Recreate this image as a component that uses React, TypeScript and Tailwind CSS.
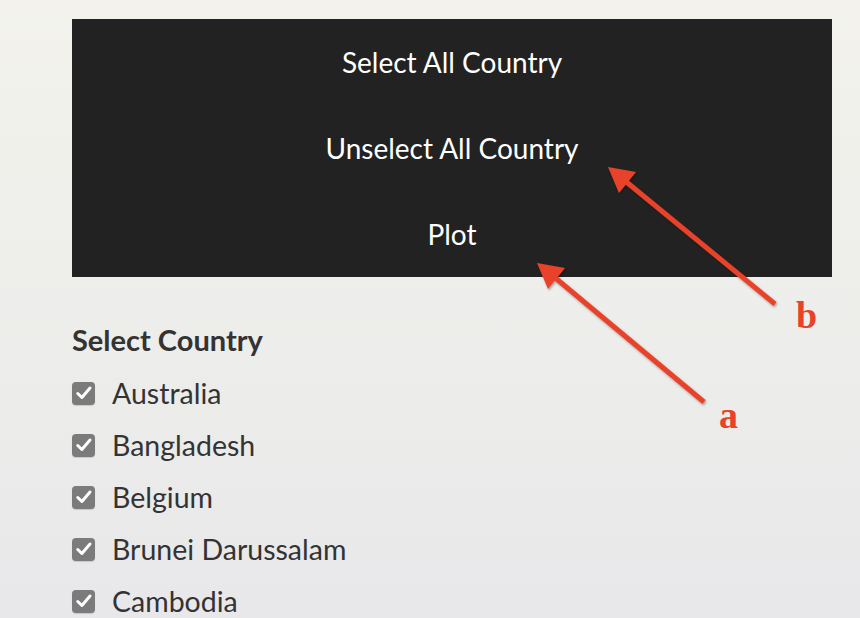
import React from "react";

const countries = ["Australia", "Bangladesh", "Belgium", "Brunei Darussalam", "Cambodia"];

function Check() {
  return (
    <span className="flex h-[23px] w-[23px] shrink-0 items-center justify-center rounded-[4px] bg-[#7b7b7b] shadow-[0_1px_1px_rgba(0,0,0,0.15)]">
      <svg width="20" height="20" viewBox="0 0 16 16" fill="none">
        <path d="M3 8.4 L6.3 11.6 L12.8 4" stroke="white" strokeWidth="2.4" strokeLinecap="round" strokeLinejoin="round" />
      </svg>
    </span>
  );
}

export default function App() {
  return (
    <div
      className="relative h-[618px] w-[860px] overflow-hidden bg-gradient-to-b from-[#f3f3ec] to-[#e8e8ea] text-[#333]"
      style={{ fontFamily: "Lato, 'Open Sans', sans-serif" }}
    >
      <div className="pl-[72px] pt-[19px]">
        <div className="flex w-[760px] flex-col bg-[#222222] text-[28px] text-white">
          <button className="flex h-[86px] items-center justify-center">Select All Country</button>
          <button className="flex h-[86px] items-center justify-center">Unselect All Country</button>
          <button className="flex h-[86px] items-center justify-center">Plot</button>
        </div>
        <div className="mt-[48px] text-[29px] font-bold leading-[30px] text-[#333]">Select Country</div>
        <div className="mt-[12px] flex flex-col">
          {countries.map((c) => (
            <label key={c} className="flex h-[52px] items-center gap-[17px]">
              <Check />
              <span className="text-[28.5px] text-[#333]">{c}</span>
            </label>
          ))}
        </div>
      </div>

      <svg className="pointer-events-none absolute left-0 top-0" width="860" height="618" viewBox="0 0 860 618">
        <defs>
          <filter id="sh" x="-10%" y="-10%" width="120%" height="120%">
            <feDropShadow dx="1" dy="1.5" stdDeviation="1.2" floodColor="#000" floodOpacity="0.35" />
          </filter>
        </defs>
        <g filter="url(#sh)" fill="#e8432a" stroke="#e8432a">
          <line x1="704" y1="402" x2="553" y2="276" strokeWidth="5" />
          <polygon points="537,263 565,268 548,289" stroke="none" />
          <line x1="775" y1="304" x2="624" y2="180" strokeWidth="5" />
          <polygon points="608,167 636,172 619,193" stroke="none" />
        </g>
        <text x="719" y="428" fontFamily="'Liberation Serif', serif" fontWeight="bold" fontSize="38" fill="#e8432a">a</text>
        <text x="796" y="328" fontFamily="'Liberation Serif', serif" fontWeight="bold" fontSize="38" fill="#e8432a">b</text>
      </svg>
    </div>
  );
}
